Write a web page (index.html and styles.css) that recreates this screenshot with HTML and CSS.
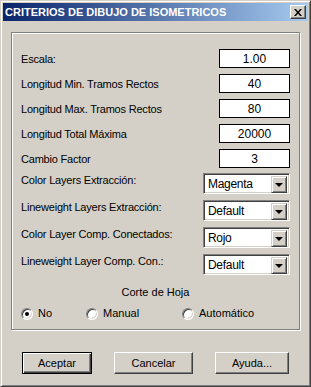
FILE: index.html
```html
<!DOCTYPE html>
<html lang="es">
<head>
    <meta charset="UTF-8">
    <title>Criterios de Dibujo de Isometricos</title>
    <link rel="stylesheet" href="styles.css">
</head>
<body>
    <div class="window">
        <!-- Title bar -->
        <div class="titlebar">
            <span class="title">CRITERIOS DE DIBUJO DE ISOMETRICOS</span>
            <button class="close" aria-label="Cerrar">
                <svg width="8" height="7" viewBox="0 0 8 7">
                    <path d="M0 0h2l2 2.5 2-2.5h2l-3 3.5 3 3.5h-2l-2-2.5-2 2.5h-2l3-3.5z" fill="#000"/>
                </svg>
            </button>
        </div>

        <div class="client">
            <div class="group">
                <div class="row">
                    <label for="escala">Escala:</label>
                    <input class="text" type="text" id="escala" value="1.00">
                </div>
                <div class="row">
                    <label for="lmin">Longitud Min. Tramos Rectos</label>
                    <input class="text" type="text" id="lmin" value="40">
                </div>
                <div class="row">
                    <label for="lmax">Longitud Max. Tramos Rectos</label>
                    <input class="text" type="text" id="lmax" value="80">
                </div>
                <div class="row">
                    <label for="ltotal">Longitud Total Máxima</label>
                    <input class="text" type="text" id="ltotal" value="20000">
                </div>
                <div class="row">
                    <label for="factor">Cambio Factor</label>
                    <input class="text" type="text" id="factor" value="3">
                </div>

                <div class="row row-select">
                    <label>Color Layers Extracción:</label>
                    <div class="combo"><span class="combo-value">Magenta</span><span class="combo-btn"><i></i></span></div>
                </div>
                <div class="row row-select">
                    <label>Lineweight Layers Extracción:</label>
                    <div class="combo"><span class="combo-value">Default</span><span class="combo-btn"><i></i></span></div>
                </div>
                <div class="row row-select">
                    <label>Color Layer Comp. Conectados:</label>
                    <div class="combo"><span class="combo-value">Rojo</span><span class="combo-btn"><i></i></span></div>
                </div>
                <div class="row row-select">
                    <label>Lineweight Layer Comp. Con.:</label>
                    <div class="combo"><span class="combo-value">Default</span><span class="combo-btn"><i></i></span></div>
                </div>

                <div class="subtitle">Corte de Hoja</div>
                <div class="radios">
                    <label class="radio"><span class="dot checked"></span>No</label>
                    <label class="radio"><span class="dot"></span>Manual</label>
                    <label class="radio"><span class="dot"></span>Automático</label>
                </div>
            </div>

            <div class="buttons">
                <button class="btn btn-default btn-ok">Aceptar</button>
                <button class="btn btn-cancel">Cancelar</button>
                <button class="btn btn-help">Ayuda...</button>
            </div>
        </div>
    </div>
</body>
</html>
```

FILE: styles.css
```css
body {
    margin: 0;
    background: #d4d0c8;
    font-family: "Liberation Sans", Arial, sans-serif;
    font-size: 11px;
    color: #000;
}
.window {
    width: 311px;
    height: 387px;
    box-sizing: border-box;
    border: 1px solid;
    border-color: #d4d0c8 #404040 #404040 #d4d0c8;
    box-shadow: inset 1px 1px 0 #fff, inset -1px -1px 0 #808080;
    padding: 2px;
    background: #d4d0c8;
}
.titlebar {
    height: 18px;
    display: flex;
    align-items: center;
    justify-content: space-between;
    padding: 0 2px;
    background: linear-gradient(to right, #0a246a, #a6caf0);
}
.title {
    color: #fff;
    font-weight: bold;
    font-size: 11px;
}
.close {
    width: 16px;
    height: 14px;
    padding: 0;
    display: flex;
    align-items: center;
    justify-content: center;
    background: #d4d0c8;
    border: 1px solid;
    border-color: #fff #404040 #404040 #fff;
    box-shadow: inset -1px -1px 0 #808080;
}
.client {
    padding-top: 11px;
}
.group {
    margin: 0 8px;
    border: 1px solid #808080;
    box-shadow: 1px 1px 0 #fff, inset 1px 1px 0 #fff;
    padding: 16px 9px 9px 9px;
}
.row {
    display: flex;
    justify-content: space-between;
    align-items: center;
    height: 19px;
    margin-bottom: 6px;
    letter-spacing: -0.2px;
}
.row:nth-child(5) {
    margin-bottom: 5px;
}
.row-select {
    height: 21px;
    align-items: flex-start;
}
.row-select label {
    padding-top: 1px;
}
.text {
    width: 71px;
    height: 19px;
    box-sizing: border-box;
    border: 1px solid #000;
    background: #fff;
    font-family: "Liberation Sans", Arial, sans-serif;
    font-size: 12px;
    text-align: center;
    padding: 0;
    margin: 0;
}
.combo {
    width: 87px;
    height: 21px;
    box-sizing: border-box;
    display: flex;
    background: #fff;
    border: 1px solid;
    border-color: #808080 #fff #fff #808080;
    box-shadow: inset 1px 1px 0 #404040, inset -1px -1px 0 #d4d0c8;
    padding: 2px;
}
.combo-value {
    flex: 1;
    font-size: 12px;
    letter-spacing: -0.3px;
    line-height: 17px;
    padding-left: 2px;
}
.combo-btn {
    width: 16px;
    height: 17px;
    box-sizing: border-box;
    display: flex;
    align-items: center;
    justify-content: center;
    background: #d4d0c8;
    border: 1px solid;
    border-color: #d4d0c8 #404040 #404040 #d4d0c8;
    box-shadow: inset 1px 1px 0 #fff, inset -1px -1px 0 #808080;
}
.combo-btn i {
    width: 0;
    height: 0;
    border-left: 4px solid transparent;
    border-right: 4px solid transparent;
    border-top: 4px solid #000;
    margin-left: -1px;
}
.subtitle {
    text-align: center;
    margin-top: 11px;
    line-height: 13px;
}
.radios {
    display: grid;
    grid-template-columns: 65px 96px 1fr;
    margin-top: 8px;
    line-height: 13px;
}
.radio {
    display: flex;
    align-items: center;
    gap: 5px;
}
.dot {
    width: 12px;
    height: 12px;
    box-sizing: border-box;
    border-radius: 50%;
    border: 1px solid;
    border-color: #808080 #fff #fff #808080;
    box-shadow: inset 1px 1px 0 #404040, inset -1px -1px 0 #d4d0c8;
    background: #fff;
    display: flex;
    align-items: center;
    justify-content: center;
}
.dot.checked::after {
    content: "";
    width: 4px;
    height: 4px;
    border-radius: 50%;
    background: #000;
}
.buttons {
    display: flex;
    gap: 22px;
    padding-left: 19px;
    margin-top: 22px;
}
.btn {
    height: 22px;
    box-sizing: border-box;
    background: #d4d0c8;
    border: 1px solid;
    border-color: #fff #404040 #404040 #fff;
    box-shadow: inset -1px -1px 0 #808080;
    font-family: "Liberation Sans", Arial, sans-serif;
    font-size: 11px;
    padding: 0;
}
.btn-default {
    border: 1px solid #000;
    box-shadow: inset 1px 1px 0 #fff, inset -1px -1px 0 #404040, inset -2px -2px 0 #808080;
}
.btn-ok {
    width: 70px;
}
.btn-cancel {
    width: 79px;
}
.btn-help {
    width: 74px;
}
```
